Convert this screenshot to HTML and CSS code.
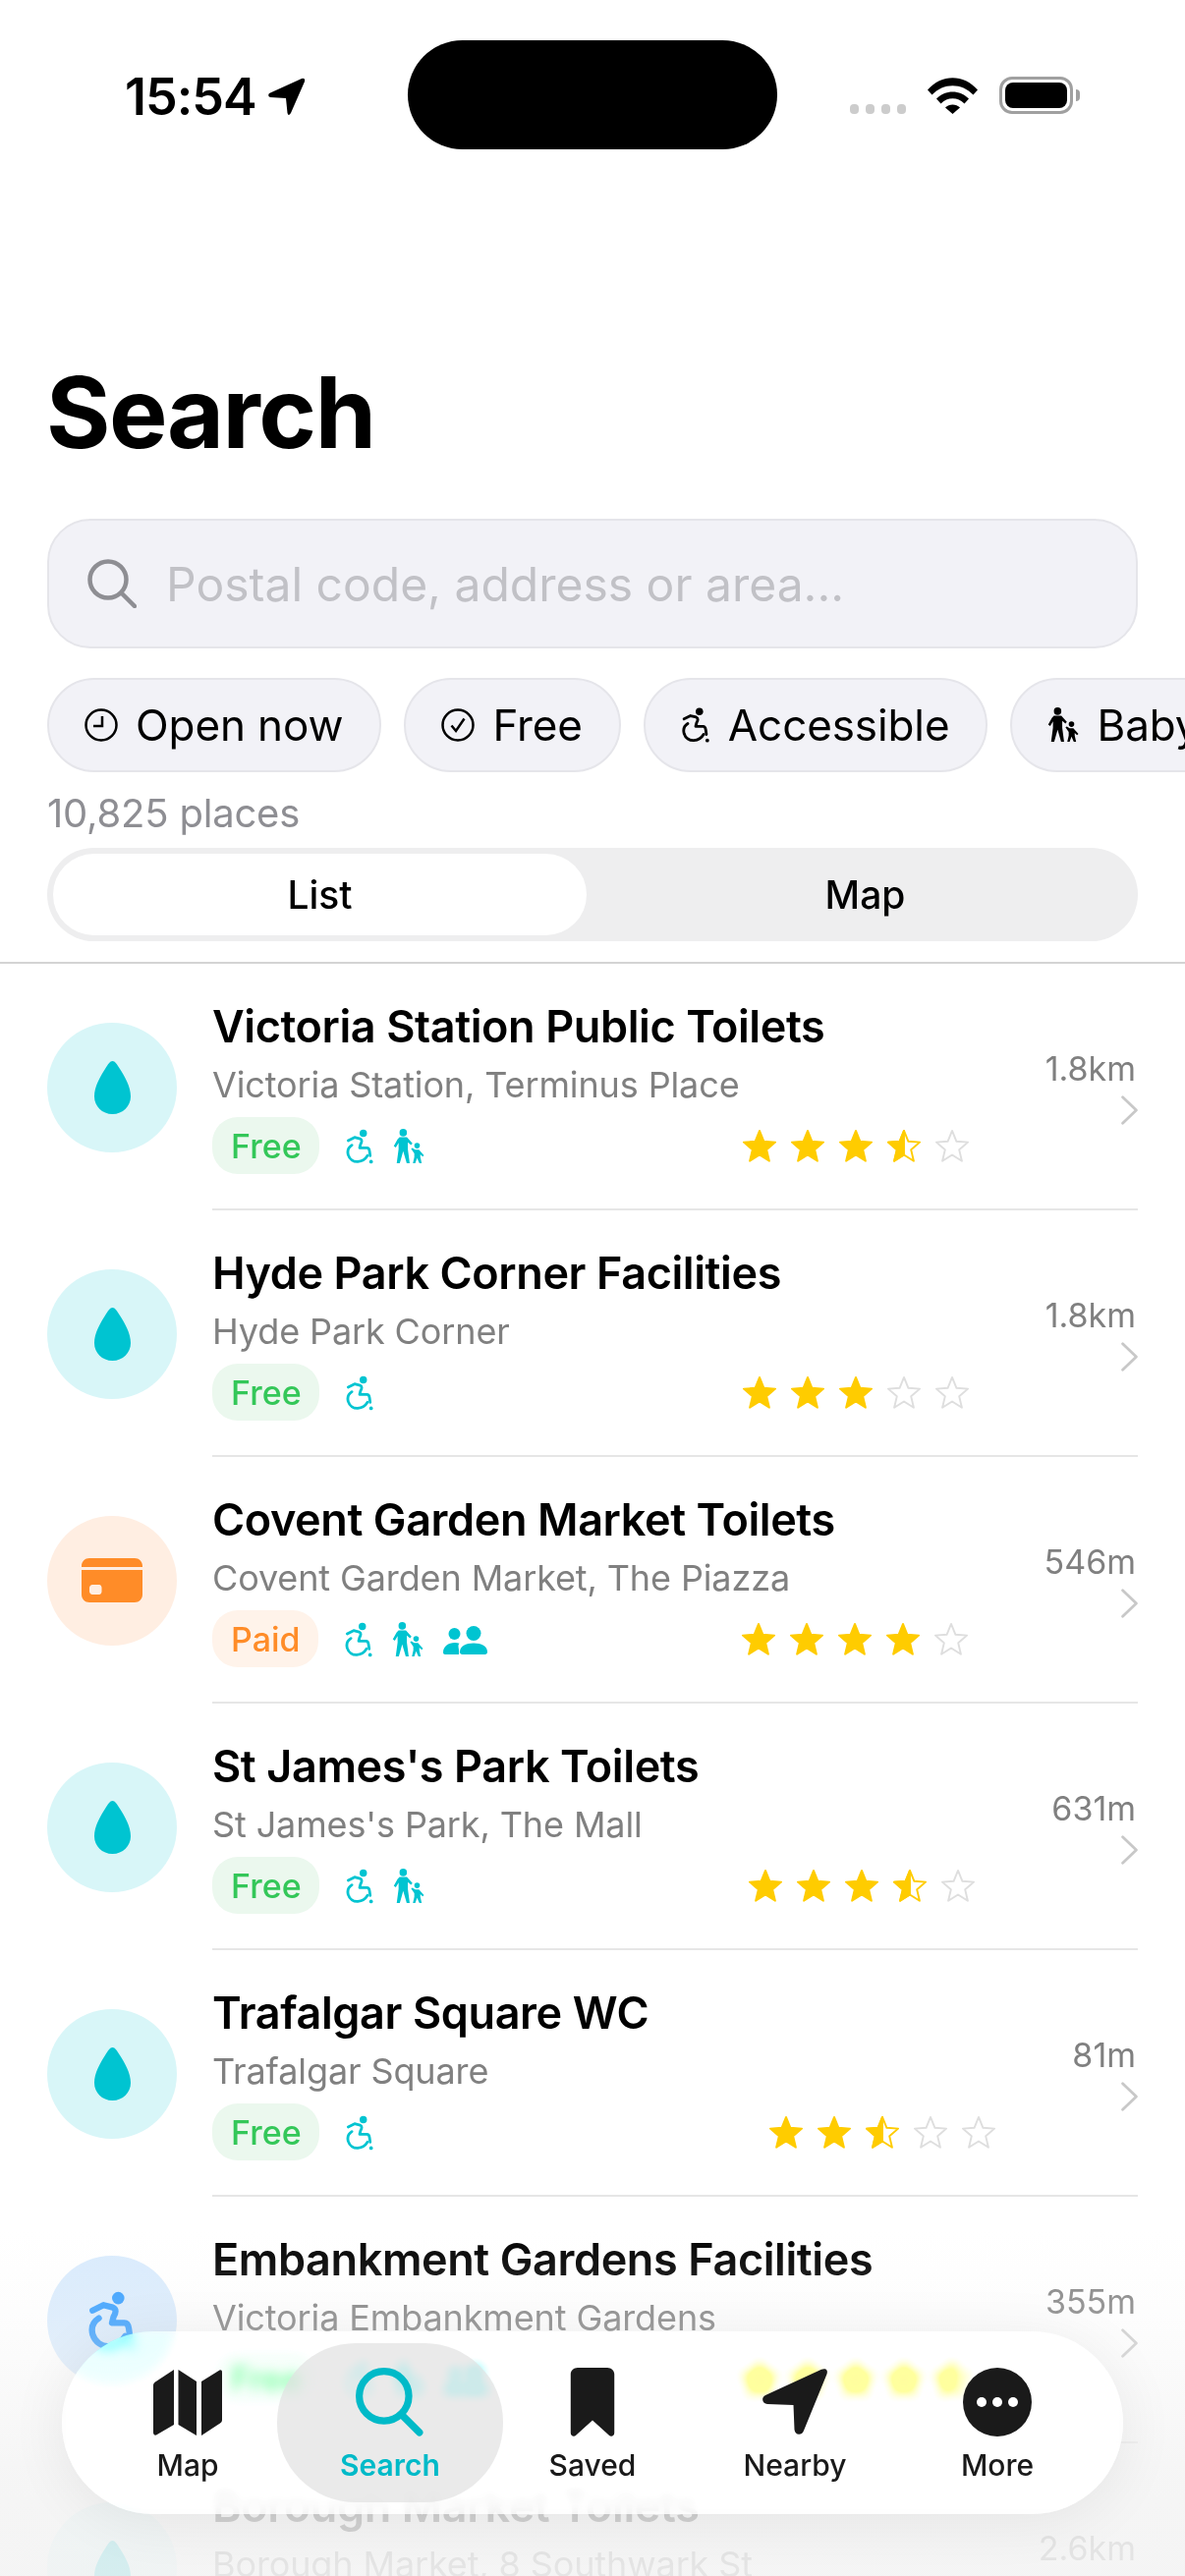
FILE: index.html
```html
<!DOCTYPE html>
<html>
<head>
    <title>Search</title>
    <link rel="stylesheet" href="styles.css">
</head>
<body>
    <!-- Icon sprites -->
    <svg class="sprites" width="0" height="0">
        <symbol id="i-drop" viewBox="0 0 37 54"><path d="M18.5 0C21 0 23 3 26 8C31 16 37 26 37 36C37 46 29 54 18.5 54C8 54 0 46 0 36C0 26 6 16 11 8C14 3 16 0 18.5 0Z"/></symbol>
        <symbol id="i-card" viewBox="0 0 62 45"><path fill-rule="evenodd" d="M8 0H54C58.500 0 62 3.500 62 8V9H0V8C0 3.500 3.500 0 8 0ZM0 12H62V37C62 41.500 58.500 45 54 45H8C3.500 45 0 41.500 0 37ZM11 27C9.500 27 8 28.500 8 30V34C8 35.500 9.500 37 11 37H18C19.500 37 20.500 35.500 20.500 34V30C20.500 28.500 19.500 27 18 27Z"/></symbol>
        <symbol id="i-wheel" viewBox="0 0 30 38">
            <circle cx="19" cy="4.500" r="4"/>
            <path class="wheel-line" d="M2.500 12.500L9.500 9L15.500 10.500C18 11.500 17.500 14 16 16.500L15 20.500H23C25 20.500 25.500 22 25.800 24L26.500 29"/>
            <path class="wheel-line" d="M6.500 17.500C2.500 20 1.500 24 2.500 28C4 33 8.500 35.800 13 35.500C18 35 21.500 32.500 23.500 29"/>
            <circle cx="27.500" cy="35.500" r="2"/>
        </symbol>
        <symbol id="i-family" viewBox="0 0 34 38">
            <circle cx="11" cy="4" r="4"/>
            <path d="M7 9H15L21 15.500L19.500 17.500L16 14.500V22L18 37H14.800L11 24L7.300 37H4L6 22V15L3 20L.8 18.500L5 11Z"/>
            <circle cx="26" cy="18" r="3"/>
            <path d="M19.500 21.500L21 20.500L24 22.500H28L33.500 28.500L32 30L29.500 27.500V30.500L31 37H28.500L26 31.500L24 37H21.500L23 30.500V26.500Z"/>
        </symbol>
        <symbol id="i-people" viewBox="0 0 45 29">
            <circle cx="11.500" cy="8" r="6"/>
            <path d="M0 27C0 21 5 17 12 17C13.500 17 15 17.200 16.500 17.800C14 20 17 24 16 29H2C.8 29 0 28.200 0 27Z"/>
            <circle cx="31" cy="7.500" r="7.500"/>
            <path d="M17 26.500C17 20.500 23 17.500 31 17.500C39 17.500 45 20.500 45 26.500C45 28 44 29 42.500 29H19.500C18 29 17 28 17 26.500Z"/>
        </symbol>
        <symbol id="i-star" viewBox="-1 -1 38 37"><polygon points="18,1 22.700,12.500 35,13.400 25.600,21.500 28.500,33.600 18,27 7.500,33.600 10.400,21.500 1,13.400 13.300,12.500" stroke-width="2" stroke-linejoin="round"/></symbol>
        <symbol id="i-star-half" viewBox="-1 -1 38 37">
            <polygon points="18,1 22.700,12.500 35,13.400 25.600,21.500 28.500,33.600 18,27 7.500,33.600 10.400,21.500 1,13.400 13.300,12.500" fill="none" stroke="#ffcc00" stroke-width="2" stroke-linejoin="round"/>
            <polygon points="18,1 13.300,12.500 1,13.400 10.400,21.500 7.500,33.600 18,27" fill="#ffcc00" stroke="#ffcc00" stroke-width="2" stroke-linejoin="round"/>
        </symbol>
        <symbol id="i-chevron" viewBox="0 0 16 28"><path d="M1.500 1.500L14.500 14L1.500 26.500" fill="none" stroke="currentColor" stroke-width="2.600" stroke-linecap="round" stroke-linejoin="round"/></symbol>
    </svg>

    <div class="phone">
        <!-- Status bar -->
        <div class="status">
            <div class="status-left">
                <span class="time">15:54</span>
                <svg class="loc" viewBox="0 0 39 39"><path d="M35 1Q39 0 38 4L24 36Q21.500 40 20.500 36L19 21L3 20Q0 19 2 16Z"/></svg>
            </div>
            <div class="island"></div>
            <div class="status-right">
                <div class="signal"><i></i><i></i><i></i><i></i></div>
                <svg class="wifi" viewBox="0 0 51 37"><path d="M0 12.500C14 -4 37 -4 51 12.500L46.500 17.500C35 5 16 5 4.500 17.500Z"/><path d="M9 21.500C18 12 33 12 42 21.500L37.500 26.500C31 19.500 20 19.500 13.500 26.500Z"/><path d="M18 30.500C22 26.500 29 26.500 33 30.500L25.500 37Z"/></svg>
                <div class="battery"><div class="battery-fill"></div></div>
                <div class="battery-nub"></div>
            </div>
        </div>

        <h1 class="title">Search</h1>

        <!-- Search box -->
        <div class="search">
            <svg class="search-icon" viewBox="0 0 50 50"><circle cx="21" cy="21" r="18.500"/><path d="M34.500 34.500L48 48"/></svg>
            <span class="placeholder">Postal code, address or area...</span>
        </div>

        <!-- Filter chips -->
        <div class="chips">
            <div class="chip">
                <svg class="chip-icon" viewBox="0 0 34 34"><circle cx="17" cy="17" r="15.500" fill="none" stroke="currentColor" stroke-width="2.500"/><path d="M18 8V18H9" fill="none" stroke="currentColor" stroke-width="2.500"/></svg>
                Open now
            </div>
            <div class="chip">
                <svg class="chip-icon" viewBox="0 0 34 34"><circle cx="17" cy="17" r="15.500" fill="none" stroke="currentColor" stroke-width="2.500"/><path d="M10.500 17.500L15 23L23.500 10.500" fill="none" stroke="currentColor" stroke-width="2.500"/></svg>
                Free
            </div>
            <div class="chip">
                <svg class="chip-icon chip-icon-wheel"><use href="#i-wheel"/></svg>
                Accessible
            </div>
            <div class="chip">
                <svg class="chip-icon chip-icon-family"><use href="#i-family"/></svg>
                Baby change
            </div>
        </div>

        <div class="count">10,825 places</div>

        <div class="segment">
            <div class="segment-item segment-active">List</div>
            <div class="segment-item segment-map">Map</div>
        </div>

        <!-- Results -->
        <div class="list">
            <div class="row">
                <div class="badge-icon badge-teal"><svg class="drop"><use href="#i-drop"/></svg></div>
                <div class="row-main">
                    <div class="row-text">
                        <div class="name">Victoria Station Public Toilets</div>
                        <div class="addr">Victoria Station, Terminus Place</div>
                        <div class="meta">
                            <span class="tag tag-free">Free</span>
                            <svg class="fac fac-wheel"><use href="#i-wheel"/></svg>
                            <svg class="fac fac-family"><use href="#i-family"/></svg>
                            <div class="stars">
                                <svg class="star star-on"><use href="#i-star"/></svg>
                                <svg class="star star-on"><use href="#i-star"/></svg>
                                <svg class="star star-on"><use href="#i-star"/></svg>
                                <svg class="star"><use href="#i-star-half"/></svg>
                                <svg class="star star-off"><use href="#i-star"/></svg>
                            </div>
                        </div>
                    </div>
                    <div class="row-side">
                        <span class="dist">1.8km</span>
                        <svg class="chevron"><use href="#i-chevron"/></svg>
                    </div>
                </div>
            </div>

            <div class="row">
                <div class="badge-icon badge-teal"><svg class="drop"><use href="#i-drop"/></svg></div>
                <div class="row-main">
                    <div class="row-text">
                        <div class="name">Hyde Park Corner Facilities</div>
                        <div class="addr">Hyde Park Corner</div>
                        <div class="meta">
                            <span class="tag tag-free">Free</span>
                            <svg class="fac fac-wheel"><use href="#i-wheel"/></svg>
                            <div class="stars">
                                <svg class="star star-on"><use href="#i-star"/></svg>
                                <svg class="star star-on"><use href="#i-star"/></svg>
                                <svg class="star star-on"><use href="#i-star"/></svg>
                                <svg class="star star-off"><use href="#i-star"/></svg>
                                <svg class="star star-off"><use href="#i-star"/></svg>
                            </div>
                        </div>
                    </div>
                    <div class="row-side">
                        <span class="dist">1.8km</span>
                        <svg class="chevron"><use href="#i-chevron"/></svg>
                    </div>
                </div>
            </div>

            <div class="row">
                <div class="badge-icon badge-orange"><svg class="card"><use href="#i-card"/></svg></div>
                <div class="row-main">
                    <div class="row-text">
                        <div class="name">Covent Garden Market Toilets</div>
                        <div class="addr">Covent Garden Market, The Piazza</div>
                        <div class="meta">
                            <span class="tag tag-paid">Paid</span>
                            <svg class="fac fac-wheel"><use href="#i-wheel"/></svg>
                            <svg class="fac fac-family"><use href="#i-family"/></svg>
                            <svg class="fac fac-people"><use href="#i-people"/></svg>
                            <div class="stars">
                                <svg class="star star-on"><use href="#i-star"/></svg>
                                <svg class="star star-on"><use href="#i-star"/></svg>
                                <svg class="star star-on"><use href="#i-star"/></svg>
                                <svg class="star star-on"><use href="#i-star"/></svg>
                                <svg class="star star-off"><use href="#i-star"/></svg>
                            </div>
                        </div>
                    </div>
                    <div class="row-side">
                        <span class="dist">546m</span>
                        <svg class="chevron"><use href="#i-chevron"/></svg>
                    </div>
                </div>
            </div>

            <div class="row">
                <div class="badge-icon badge-teal"><svg class="drop"><use href="#i-drop"/></svg></div>
                <div class="row-main">
                    <div class="row-text">
                        <div class="name">St James's Park Toilets</div>
                        <div class="addr">St James's Park, The Mall</div>
                        <div class="meta">
                            <span class="tag tag-free">Free</span>
                            <svg class="fac fac-wheel"><use href="#i-wheel"/></svg>
                            <svg class="fac fac-family"><use href="#i-family"/></svg>
                            <div class="stars">
                                <svg class="star star-on"><use href="#i-star"/></svg>
                                <svg class="star star-on"><use href="#i-star"/></svg>
                                <svg class="star star-on"><use href="#i-star"/></svg>
                                <svg class="star"><use href="#i-star-half"/></svg>
                                <svg class="star star-off"><use href="#i-star"/></svg>
                            </div>
                        </div>
                    </div>
                    <div class="row-side">
                        <span class="dist">631m</span>
                        <svg class="chevron"><use href="#i-chevron"/></svg>
                    </div>
                </div>
            </div>

            <div class="row">
                <div class="badge-icon badge-teal"><svg class="drop"><use href="#i-drop"/></svg></div>
                <div class="row-main">
                    <div class="row-text">
                        <div class="name">Trafalgar Square WC</div>
                        <div class="addr">Trafalgar Square</div>
                        <div class="meta">
                            <span class="tag tag-free">Free</span>
                            <svg class="fac fac-wheel"><use href="#i-wheel"/></svg>
                            <div class="stars">
                                <svg class="star star-on"><use href="#i-star"/></svg>
                                <svg class="star star-on"><use href="#i-star"/></svg>
                                <svg class="star"><use href="#i-star-half"/></svg>
                                <svg class="star star-off"><use href="#i-star"/></svg>
                                <svg class="star star-off"><use href="#i-star"/></svg>
                            </div>
                        </div>
                    </div>
                    <div class="row-side">
                        <span class="dist">81m</span>
                        <svg class="chevron"><use href="#i-chevron"/></svg>
                    </div>
                </div>
            </div>

            <div class="row">
                <div class="badge-icon badge-blue"><svg class="big-wheel"><use href="#i-wheel"/></svg></div>
                <div class="row-main">
                    <div class="row-text">
                        <div class="name">Embankment Gardens Facilities</div>
                        <div class="addr">Victoria Embankment Gardens</div>
                        <div class="meta">
                            <span class="tag tag-free">Free</span>
                            <svg class="fac fac-wheel"><use href="#i-wheel"/></svg>
                            <svg class="fac fac-family"><use href="#i-family"/></svg>
                            <svg class="fac fac-people"><use href="#i-people"/></svg>
                            <div class="stars">
                                <svg class="star star-on"><use href="#i-star"/></svg>
                                <svg class="star star-on"><use href="#i-star"/></svg>
                                <svg class="star star-on"><use href="#i-star"/></svg>
                                <svg class="star star-on"><use href="#i-star"/></svg>
                                <svg class="star"><use href="#i-star-half"/></svg>
                            </div>
                        </div>
                    </div>
                    <div class="row-side">
                        <span class="dist">355m</span>
                        <svg class="chevron"><use href="#i-chevron"/></svg>
                    </div>
                </div>
            </div>

            <div class="row">
                <div class="badge-icon badge-teal"><svg class="drop"><use href="#i-drop"/></svg></div>
                <div class="row-main">
                    <div class="row-text">
                        <div class="name">Borough Market Toilets</div>
                        <div class="addr">Borough Market, 8 Southwark St</div>
                    </div>
                    <div class="row-side">
                        <span class="dist">2.6km</span>
                    </div>
                </div>
            </div>
        </div>

        <div class="fade"></div>

        <!-- Tab bar -->
        <nav class="tabbar">
            <div class="tab">
                <svg class="tab-icon" viewBox="0 0 70 68"><path d="M21 1V57L3 67.500C1.500 68 0 67 0 65V17C0 15.500 .8 14.500 2 13.500Z"/><path d="M25.500 1L44 13V68L25.500 57Z"/><path d="M49 13L67.500 1.500C69 1 70 2 70 3.500V52C70 53.500 69.500 54.500 68 55.500L49 68Z"/></svg>
                <span class="tab-label">Map</span>
            </div>
            <div class="tab tab-active">
                <svg class="tab-icon tab-search" viewBox="0 0 68 68"><circle cx="28" cy="28" r="24.500"/><path d="M45 46L63 64"/></svg>
                <span class="tab-label">Search</span>
            </div>
            <div class="tab">
                <svg class="tab-icon" viewBox="0 0 70 74"><path d="M19 0H51C55 0 58.500 3 58.500 7V70C58.500 73.500 55 75 52.500 72.500L35 56.500L17.500 72.500C15 75 11.500 73.500 11.500 70V7C11.500 3 15 0 19 0Z"/></svg>
                <span class="tab-label">Saved</span>
            </div>
            <div class="tab">
                <svg class="tab-icon" viewBox="0 0 70 68"><path d="M62 .8C66.500 -.8 69 1.500 67.500 5.500L44 63C42 68.500 35 68 34.500 62L33.500 37L7 36C1.500 35.500 .5 29 5 27Z"/></svg>
                <span class="tab-label">Nearby</span>
            </div>
            <div class="tab">
                <svg class="tab-icon" viewBox="0 0 70 70"><circle cx="35" cy="35" r="35"/><circle cx="19" cy="35" r="5" fill="#fff"/><circle cx="35" cy="35" r="5" fill="#fff"/><circle cx="51" cy="35" r="5" fill="#fff"/></svg>
                <span class="tab-label">More</span>
            </div>
        </nav>
    </div>
</body>
</html>
```

FILE: styles.css
```css
* {
    box-sizing: border-box;
}

html, body {
    margin: 0;
    padding: 0;
    background: #fff;
}

body {
    font-family: Inter, "Liberation Sans", sans-serif;
    color: #000;
}

.sprites {
    display: block;
    height: 0;
}

.wheel-line {
    fill: none;
    stroke: currentColor;
    stroke-width: var(--wheel-width, 3);
    stroke-linecap: round;
    stroke-linejoin: round;
}

.phone {
    position: relative;
    width: 1206px;
    height: 2622px;
    overflow: hidden;
    background: #fff;
}

/* status bar */
.status {
    display: flex;
    align-items: flex-start;
    height: 111px;
    margin-top: 41px;
    padding-left: 127px;
}
.status-left {
    display: flex;
    align-items: center;
    width: 288px;
    height: 39px;
    margin-top: 38px;
    gap: 11px;
}
.time {
    font-size: 52px;
    font-weight: 600;
    letter-spacing: -1px;
    line-height: 39px;
}
.loc {
    width: 39px;
    height: 39px;
}
.island {
    width: 376px;
    height: 111px;
    border-radius: 56px;
    background: #000;
}
.status-right {
    display: flex;
    align-items: flex-start;
    margin-left: 74px;
    margin-top: 37px;
}
.signal {
    display: flex;
    gap: 7px;
    margin-top: 28px;
}
.signal i {
    width: 9px;
    height: 10px;
    border-radius: 4px;
    background: #ccc;
}
.wifi {
    width: 51px;
    height: 37px;
    margin-left: 22px;
    margin-top: 1px;
}
.battery {
    width: 75px;
    height: 38px;
    margin-left: 22px;
    padding: 3px;
    border: 3px solid #a0a0a0;
    border-radius: 13px;
}
.battery-fill {
    width: 100%;
    height: 100%;
    border-radius: 8px;
    background: #000;
}
.battery-nub {
    width: 4px;
    height: 12px;
    margin: 13px 0 0 3px;
    border-radius: 0 4px 4px 0;
    background: #a0a0a0;
}

.title {
    margin: 208px 0 0 47px;
    font-size: 100px;
    font-weight: 700;
    line-height: 120px;
    letter-spacing: -1.500px;
}

/* search */
.search {
    display: flex;
    align-items: center;
    height: 132px;
    margin: 48px 48px 0;
    padding-left: 39px;
    gap: 30px;
    border: 2px solid #e5e5ea;
    border-radius: 44px;
    background: #f2f2f7;
}
.search-icon {
    flex: none;
    width: 50px;
    height: 50px;
    fill: none;
    stroke: #8e8e93;
    stroke-width: 4.500;
    stroke-linecap: round;
}
.placeholder {
    font-size: 48px;
    color: #c1c1c6;
    white-space: nowrap;
}

/* chips */
.chips {
    display: flex;
    gap: 23px;
    margin: 30px 0 0 48px;
    width: 1158px;
    overflow: hidden;
}
.chip {
    display: flex;
    flex: none;
    align-items: center;
    height: 96px;
    padding: 0 37px 0 36px;
    gap: 18px;
    border: 2px solid #e5e5ea;
    border-radius: 48px;
    background: #f2f2f7;
    font-size: 44px;
    letter-spacing: -.1px;
    white-space: nowrap;
}
.chip-icon {
    flex: none;
    width: 34px;
    height: 34px;
}
.chip-icon-wheel {
    width: 30px;
    height: 36px;
}
.chip-icon-family {
    width: 32px;
    height: 36px;
}

.count {
    margin: 20px 0 0 48px;
    font-size: 40px;
    line-height: 44px;
    letter-spacing: -.2px;
    color: #8e8e93;
}

/* list / map switch */
.segment {
    display: grid;
    grid-template-columns: 1fr 1fr;
    height: 95px;
    margin: 13px 48px 0;
    padding: 6px;
    border-radius: 48px;
    background: #eeeeef;
}
.segment-item {
    display: flex;
    align-items: center;
    justify-content: center;
    font-size: 39px;
    font-weight: 500;
}
.segment-active {
    margin-right: 6px;
    border-radius: 42px;
    background: #fff;
}
.segment-map {
    padding-left: 6px;
}

/* results */
.list {
    margin-top: 21px;
    border-top: 2px solid #d4d4d4;
}
.row {
    display: flex;
    align-items: center;
    height: 251px;
    padding: 0 48px;
    gap: 36px;
}
.badge-icon {
    display: flex;
    flex: none;
    align-items: center;
    justify-content: center;
    width: 132px;
    height: 132px;
    border-radius: 50%;
}
.badge-teal {
    background: #d8f6f8;
    fill: #00c4d1;
}
.badge-orange {
    background: #ffeee2;
    fill: #ff8c28;
}
.badge-blue {
    background: #d9ebfd;
    color: #2f9bff;
    fill: #2f9bff;
}
.drop {
    width: 37px;
    height: 54px;
}
.card {
    width: 62px;
    height: 45px;
}
.big-wheel {
    --wheel-width: 4;
    width: 48px;
    height: 60px;
}
.row-main {
    display: flex;
    flex: 1;
    align-self: stretch;
    padding-top: 36px;
    border-bottom: 2px solid #e6e6e6;
}
.row-text {
    flex: 1;
    min-width: 0;
    padding-right: 77px;
}
.name {
    font-size: 45px;
    font-weight: 600;
    line-height: 56px;
    letter-spacing: -.4px;
    white-space: nowrap;
}
.addr {
    margin-top: 7px;
    font-size: 36px;
    line-height: 48px;
    letter-spacing: -.12px;
    color: #808080;
    white-space: nowrap;
}
.meta {
    display: flex;
    align-items: center;
    height: 58px;
    margin-top: 9px;
    color: #00c4d1;
    fill: #00c4d1;
}
.tag {
    display: flex;
    align-items: center;
    height: 58px;
    padding: 0 18px 0 19px;
    border-radius: 26px;
    font-size: 34px;
    font-weight: 500;
}
.tag-free {
    background: #ebf8ee;
    color: #34c759;
}
.tag-paid {
    background: #fff3ea;
    color: #ff8c28;
}
.fac {
    flex: none;
    margin-top: 2px;
}
.fac-wheel {
    width: 28px;
    height: 36px;
    margin-left: 27px;
}
.fac-family {
    width: 32px;
    height: 36px;
    margin-left: 20px;
}
.fac-people {
    width: 45px;
    height: 29px;
    margin-left: 20px;
}
.stars {
    display: flex;
    gap: 13px;
    margin-left: auto;
}
.star {
    width: 36px;
    height: 35px;
}
.star-on {
    fill: #ffcc00;
    stroke: #ffcc00;
}
.star-off {
    fill: none;
    stroke: #dedede;
}
.row-side {
    display: flex;
    flex-direction: column;
    align-items: flex-end;
    padding-top: 49px;
}
.dist {
    font-size: 34px;
    line-height: 44px;
    color: #808080;
    margin-right: 2px;
}
.chevron {
    width: 17px;
    height: 30px;
    margin-top: 5px;
    color: #c8c8c8;
}

/* fades the list out behind the tab bar */
.fade {
    position: absolute;
    left: 0;
    right: 0;
    top: 2270px;
    height: 352px;
    background: linear-gradient(to bottom,
        rgba(245, 245, 245, 0) 0,
        rgba(245, 245, 245, .22) 90px,
        rgba(243, 243, 243, .8) 250px,
        rgba(243, 243, 243, .85) 290px,
        rgba(243, 243, 243, .88) 100%);
}

/* tab bar */
.tabbar {
    position: absolute;
    left: 63px;
    bottom: 63px;
    display: grid;
    grid-template-columns: repeat(5, 206px);
    width: 1080px;
    height: 186px;
    padding: 12px 25px;
    border-radius: 93px;
    background: rgba(255, 255, 255, .62);
    backdrop-filter: blur(6px) saturate(5) brightness(1.08);
    box-shadow: 0 6px 60px rgba(0, 0, 0, .07);
}
.tab {
    display: flex;
    flex-direction: column;
    align-items: center;
    padding-top: 25px;
    fill: #1a1a1a;
    color: #1a1a1a;
}
.tab-icon {
    width: 70px;
    height: 70px;
}
.tab-label {
    margin-top: 10px;
    font-size: 30px;
    font-weight: 500;
    line-height: 38px;
}
.tab-active {
    margin: 0 -12px;
    border-radius: 80px;
    background: rgba(225, 225, 225, .7);
    color: #00bac8;
}
.tab-search {
    fill: none;
    stroke: #00bac8;
    stroke-width: 7;
    stroke-linecap: round;
}
.tab-active .tab-label {
    font-weight: 600;
}
```
